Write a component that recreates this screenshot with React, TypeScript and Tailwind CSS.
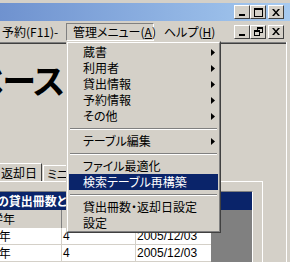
import React from "react";

const FONT = "font-['Noto_Sans_CJK_JP','Noto_Sans_CJK_SC',sans-serif] [font-feature-settings:'palt']";

function CapBtn({ children, gap }: { children: React.ReactNode; gap?: boolean }) {
  return (
    <div
      className={`w-[16px] h-[14px] bg-[#d4d0c8] border-t border-l border-t-white border-l-white border-r border-b border-r-[#404040] border-b-[#404040] flex items-center justify-center ${gap ? "ml-[2px]" : ""}`}
    >
      {children}
    </div>
  );
}

function MinIcon() {
  return (
    <svg width="8" height="8" viewBox="0 0 8 8">
      <rect x="1" y="6" width="6" height="2" fill="#000" />
    </svg>
  );
}
function MaxIcon() {
  return (
    <svg width="9" height="9" viewBox="0 0 9 9">
      <rect x="0.5" y="0.5" width="8" height="8" fill="none" stroke="#000" />
      <rect x="0" y="0" width="9" height="2" fill="#000" />
    </svg>
  );
}
function RestoreIcon() {
  return (
    <svg width="9" height="9" viewBox="0 0 9 9">
      <rect x="3.5" y="0.5" width="5" height="5" fill="none" stroke="#000" />
      <rect x="3" y="0" width="6" height="2" fill="#000" />
      <rect x="0.5" y="3.5" width="5" height="5" fill="#d4d0c8" stroke="#000" />
      <rect x="0" y="3" width="6" height="2" fill="#000" />
    </svg>
  );
}
function CloseIcon() {
  return (
    <svg width="8" height="7" viewBox="0 0 8 7">
      <path d="M0 0h2l2 2.5L6 0h2L5 3.5 8 7H6L4 4.5 2 7H0l3-3.5z" fill="#000" />
    </svg>
  );
}

function Arrow() {
  return (
    <svg width="4" height="7" viewBox="0 0 4 7" className="absolute right-[3px] top-[5px]">
      <path d="M0 0L4 3.5L0 7Z" fill="#000" />
    </svg>
  );
}

function Item({ label, arrow, active }: { label: string; arrow?: boolean; active?: boolean }) {
  return (
    <div
      className={`relative h-[16px] pl-[14px] flex items-center text-[12px] leading-none ${active ? "bg-[#0a246a] text-white" : "text-black"}`}
    >
      <span>{label}</span>
      {arrow && <Arrow />}
    </div>
  );
}

function Sep() {
  return (
    <div className="h-[9px] flex flex-col justify-center px-[1px]">
      <div className="h-px bg-[#808080]" />
      <div className="h-px bg-white" />
    </div>
  );
}

const NUM = "font-['Liberation_Sans',sans-serif]";

export default function App() {
  return (
    <div className={`relative w-[290px] h-[262px] overflow-hidden bg-[#d4d0c8] ${FONT}`}>
      {/* window frame top */}
      <div className="h-[3px] bg-[#d4d0c8]" />
      {/* title bar */}
      <div className="h-[18px] bg-gradient-to-r from-[#6f92cf] to-[#a6caf0] flex items-center justify-end pr-[6px]">
        <CapBtn><MinIcon /></CapBtn>
        <CapBtn><MaxIcon /></CapBtn>
        <CapBtn gap><CloseIcon /></CapBtn>
      </div>
      {/* menu bar */}
      <div className="h-[21px] flex items-center text-[12px] leading-none relative">
        <div className="pl-[2px] w-[66px] whitespace-nowrap">予約(F11)-</div>
        <div className="h-[18px] w-[88px] flex items-center pl-[6px] border border-t-[#808080] border-l-[#808080] border-r-white border-b-white whitespace-nowrap">
          管理メニュー(<span className="underline">A</span>)
        </div>
        <div className="pl-[10px] whitespace-nowrap">ヘルプ(<span className="underline">H</span>)</div>
        <div className="ml-auto pr-[6px] flex">
          <CapBtn><MinIcon /></CapBtn>
          <CapBtn><RestoreIcon /></CapBtn>
          <CapBtn gap><CloseIcon /></CapBtn>
        </div>
      </div>
      {/* client area */}
      <div className="h-[220px] flex">
        <div className="w-[286px] flex flex-col">
          <div className="h-px bg-[#808080]" />
          <div className="h-px bg-[#404040]" />
          <div className="h-[121px]">
            <div className="w-[64px] flex justify-end mt-[14px]">
              <div className="text-[34px] font-bold leading-[44px] tracking-[-1px] whitespace-nowrap shrink-0">データベース</div>
            </div>
          </div>
          {/* tabs */}
          <div className="h-[18px] flex items-end">
            <div className="h-[18px] w-[42px] bg-[#d4d0c8] border-t border-t-white border-r border-r-[#404040] text-[12px] leading-none flex items-center justify-end pr-[4px] whitespace-nowrap">
              返却日
            </div>
            <div className="h-[16px] w-[60px] ml-[1px] border-t border-t-white border-l border-l-white text-[12px] leading-none flex items-center pl-[3px] whitespace-nowrap">
              ミニ統計
            </div>
          </div>
          {/* tab page */}
          <div className="w-[263px] flex-1 border-t border-t-white border-r border-r-white pt-[9px]">
            <div className="w-[253px] h-full border-t border-t-[#808080] border-r border-r-white flex flex-col">
              <div className="h-[18px] bg-[#0a246a] text-white text-[12px] font-bold leading-none flex items-center whitespace-nowrap">
                <span className="ml-[-27px]">学年の貸出冊数と返却日</span>
              </div>
              <div className="flex flex-1">
                <div className="w-[211px] bg-white flex flex-col">
                  <div className="h-[18px] bg-[#d4d0c8] flex text-[12px] leading-none">
                    <div className="w-[62px] border-r border-r-[#808080] flex items-center"><span className="ml-[-9px]">学年</span></div>
                    <div className="w-[74px] border-r border-r-[#808080]" />
                    <div className="flex-1" />
                  </div>
                  {[0, 1].map((i) => (
                    <div key={i} className="h-[17px] shrink-0 flex text-[12px] leading-none border-b border-b-[#d4d0c8]">
                      <div className="w-[62px] border-r border-r-[#d4d0c8] flex items-center"><span className="ml-[-8px]">2年</span></div>
                      <div className={`w-[74px] border-r border-r-[#d4d0c8] flex items-center pl-[1px] ${NUM}`}>4</div>
                      <div className={`flex-1 flex items-center pl-[1px] ${NUM}`}>2005/12/03</div>
                    </div>
                  ))}
                </div>
                <div className="flex-1 bg-[#808080]" />
              </div>
            </div>
          </div>
        </div>
        <div className="w-px bg-white" />
      </div>

      {/* dropdown menu overlay */}
      <div className="absolute left-[66px] top-[41px] w-[155px] h-[192px] bg-[#d4d0c8] border border-t-[#d4d0c8] border-l-[#d4d0c8] border-r-[#404040] border-b-[#404040]">
        <div className="h-full border border-t-white border-l-white border-r-[#808080] border-b-[#808080] p-px">
          <Item label="蔵書" arrow />
          <Item label="利用者" arrow />
          <Item label="貸出情報" arrow />
          <Item label="予約情報" arrow />
          <Item label="その他" arrow />
          <Sep />
          <Item label="テーブル編集" arrow />
          <Sep />
          <Item label="ファイル最適化" />
          <Item label="検索テーブル再構築" active />
          <Sep />
          <Item label="貸出冊数・返却日設定" />
          <Item label="設定" />
        </div>
      </div>
    </div>
  );
}
